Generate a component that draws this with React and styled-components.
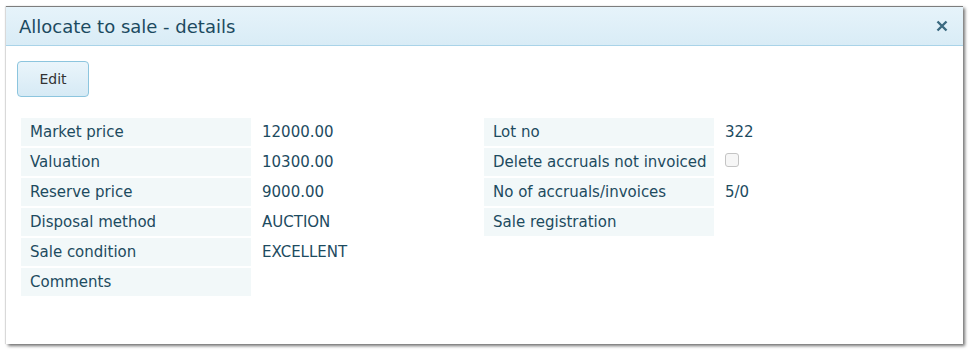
import React from "react";
import styled, { createGlobalStyle } from "styled-components";

const GlobalStyle = createGlobalStyle`
  html, body {
    margin: 0;
    padding: 0;
    background: #ffffff;
  }
  body {
    font-family: "DejaVu Sans", Verdana, sans-serif;
  }
`;

const Page = styled.div`
  padding: 6px 10px 10px 6px;
`;

const Dialog = styled.div`
  width: 957px;
  height: 337px;
  background: #fff;
  border-top: 1px solid #7d7d7d;
  box-shadow: 2px 2px 3px rgba(0, 0, 0, 0.55), -1px 0 1px rgba(0, 0, 0, 0.12);
  display: flex;
  flex-direction: column;
`;

const Header = styled.div`
  height: 38px;
  background: linear-gradient(#e6f3fa, #d9ecf6);
  border-bottom: 1px solid #a9d3e8;
  display: flex;
  align-items: center;
  justify-content: space-between;
  padding: 0 15px 0 13px;
`;

const Title = styled.div`
  font-size: 18px;
  color: #1b4a60;
`;

const Close = styled.button`
  border: none;
  background: none;
  padding: 0;
  width: 12px;
  height: 12px;
  display: flex;
  cursor: pointer;
`;

const Body = styled.div`
  padding: 15px 0 0 11px;
`;

const EditButton = styled.button`
  width: 72px;
  height: 36px;
  border: 1px solid #8cc5de;
  border-radius: 4px;
  background: linear-gradient(#eaf5fb, #d6eaf5);
  font-family: "DejaVu Sans", Verdana, sans-serif;
  font-size: 14px;
  color: #333;
  cursor: pointer;
`;

const Details = styled.div`
  display: flex;
  margin: 21px 0 0 4px;
`;

const Section = styled.div`
  display: grid;
  grid-template-columns: 230px ${(p) => p.$valueWidth};
  row-gap: 2px;
  align-content: start;
`;

const Label = styled.div`
  height: 28px;
  background: #f2f8f9;
  color: #1d4b5f;
  font-size: 15px;
  display: flex;
  align-items: center;
  padding-left: 9px;
  white-space: nowrap;
`;

const Value = styled.div`
  height: 28px;
  color: #1d4b5f;
  font-size: 15px;
  display: flex;
  align-items: center;
  padding-left: 11px;
  white-space: nowrap;
`;

const Check = styled.span`
  width: 12px;
  height: 12px;
  border: 1px solid #c4c4c4;
  border-radius: 3px;
  background: #f6f6f6;
  margin: -5px 0 0 0;
`;

const left = [
  ["Market price", "12000.00"],
  ["Valuation", "10300.00"],
  ["Reserve price", "9000.00"],
  ["Disposal method", "AUCTION"],
  ["Sale condition", "EXCELLENT"],
  ["Comments", ""],
];

const right = [
  ["Lot no", "322"],
  ["Delete accruals not invoiced", null],
  ["No of accruals/invoices", "5/0"],
  ["Sale registration", ""],
];

export default function App() {
  return (
    <Page>
      <GlobalStyle />
      <Dialog>
        <Header>
          <Title>Allocate to sale - details</Title>
          <Close aria-label="close">
            <svg width="12" height="12" viewBox="0 0 12 12">
              <path d="M1.5 1.5 L10.5 10.5 M10.5 1.5 L1.5 10.5" stroke="#3b6a80" strokeWidth="2.4" />
            </svg>
          </Close>
        </Header>
        <Body>
          <EditButton>Edit</EditButton>
          <Details>
            <Section $valueWidth="233px">
              {left.map(([l, v]) => (
                <React.Fragment key={l}>
                  <Label>{l}</Label>
                  <Value>{v}</Value>
                </React.Fragment>
              ))}
            </Section>
            <Section $valueWidth="200px">
              {right.map(([l, v]) => (
                <React.Fragment key={l}>
                  <Label>{l}</Label>
                  <Value>{v === null ? <Check /> : v}</Value>
                </React.Fragment>
              ))}
            </Section>
          </Details>
        </Body>
      </Dialog>
    </Page>
  );
}
